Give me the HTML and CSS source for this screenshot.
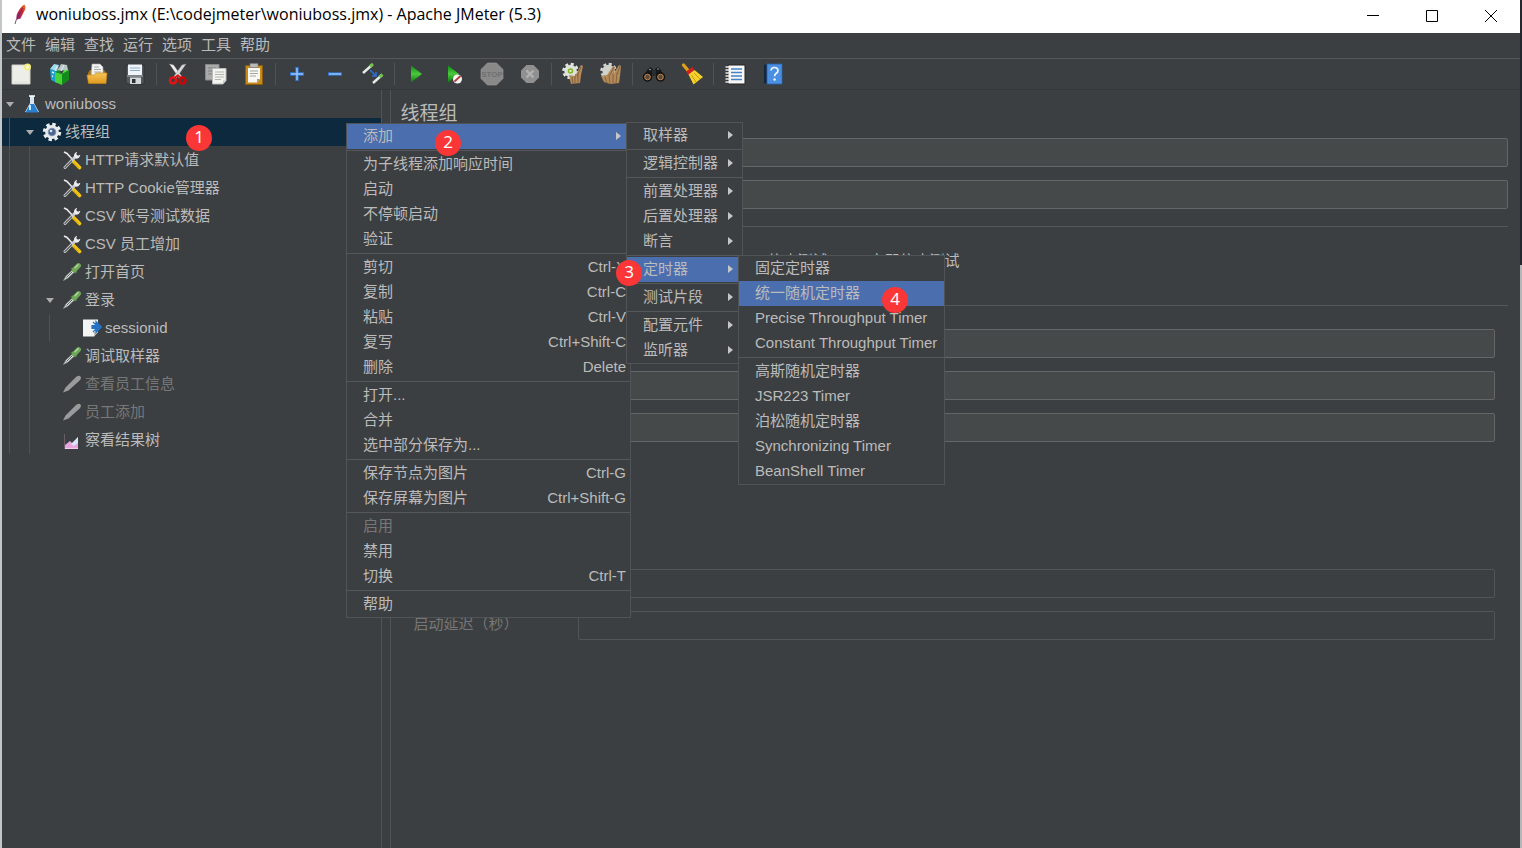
FILE: index.html
```html
<!DOCTYPE html>
<html lang="zh-CN">
<head>
<meta charset="utf-8">
<title>woniuboss.jmx - Apache JMeter (5.3)</title>
<link rel="stylesheet" href="styles.css">
</head>
<body>
<svg class="defs" aria-hidden="true">
  <defs>
    <linearGradient id="green" x1="0" y1="0" x2="0" y2="1"><stop offset="0" stop-color="#0a8f12"/><stop offset=".5" stop-color="#4cc83c"/><stop offset="1" stop-color="#067a0c"/></linearGradient>
    <linearGradient id="feather" x1="1" y1="0" x2="0" y2="1"><stop offset="0" stop-color="#f0852b"/><stop offset=".4" stop-color="#d22b35"/><stop offset="1" stop-color="#8b1f7a"/></linearGradient>
    <linearGradient id="gold" x1="0" y1="0" x2="0" y2="1"><stop offset="0" stop-color="#f5c45a"/><stop offset="1" stop-color="#e09a1c"/></linearGradient>
    <symbol id="tools" viewBox="0 0 20 20">
      <path d="M2 2l3 1.5L11 10" fill="none" stroke="#e8e8e8" stroke-width="1.6"/>
      <path d="M10.5 10.5l7 7" stroke="#f2c413" stroke-width="3.6" stroke-linecap="round"/>
      <path d="M11 12.5l5 5" stroke="#c58f06" stroke-width="1"/>
      <path d="M3 17.5L14 6" stroke="#c9cdd0" stroke-width="3" stroke-linecap="round"/>
      <path d="M3 17.5L9.5 11" stroke="#5b6064" stroke-width="1.2" stroke-linecap="round"/>
      <path d="M18.3 4.8l-2.5 1-1.6-1.5.9-2.6a4.2 4.2 0 0 0-3 5.2l1.8 1.9a4.2 4.2 0 0 0 4.4-4z" fill="#e9ebec"/>
    </symbol>
    <symbol id="pipette" viewBox="0 0 20 20">
      <path d="M1.500 18.500L4 14l7-6.500 2 2L6 16z" fill="#dfe4e2" stroke="#84908c" stroke-width=".7"/>
      <path d="M4.500 15.500l6-6" stroke="#555" stroke-width=".9"/>
      <path d="M9.500 6l4.800 4.800" stroke="#4d8a3b" stroke-width="2.200"/>
      <path d="M12.500 7.800l4-4.200" stroke="#6fa858" stroke-width="5" stroke-linecap="round"/>
      <path d="M13 5.800l3-3" stroke="#b5d9a4" stroke-width="1.300" stroke-linecap="round"/>
    </symbol>
    <symbol id="pipette-off" viewBox="0 0 20 20">
      <path d="M1 18.500l2.500-5L14 3q4-2.500 5 .5 0 1.800-1.600 3.200L6.500 16.500z" fill="#9a9b9b"/>
    </symbol>
  </defs>
</svg>

<div class="window">
<div class="app">
  <header class="titlebar">
    <svg class="app-icon" viewBox="0 0 16 22" aria-hidden="true"><path d="M12.500 1.500q2.500 3-1 8l-3 6-3.500 1Q3.500 13 6 9q3-6 6.500-7.500z" fill="url(#feather)"/><path d="M11 5L4.500 16 3 21" fill="none" stroke="#6a1c50" stroke-width=".8"/></svg>
    <h1 class="title">woniuboss.jmx (E:\codejmeter\woniuboss.jmx) - Apache JMeter (5.3)</h1>
    <button class="winbtn" aria-label="最小化"><svg viewBox="0 0 14 14"><path d="M1 6.500h12"/></svg></button>
    <button class="winbtn" aria-label="最大化"><svg viewBox="0 0 14 14"><path d="M1.500 1.500h11v11h-11z"/></svg></button>
    <button class="winbtn" aria-label="关闭"><svg viewBox="0 0 14 14"><path d="M1 1l12 12M13 1L1 13"/></svg></button>
  </header>

  <nav class="menubar">
    <button>文件</button><button>编辑</button><button>查找</button><button>运行</button><button>选项</button><button>工具</button><button>帮助</button>
  </nav>

  <div class="toolbar" role="toolbar">
    <button aria-label="新建"><svg viewBox="0 0 24 24"><path d="M3 3h18v19H3z" fill="#eeeee8" stroke="#d2d2cc"/><path d="M5 20h14" stroke="#ddd"/><circle cx="18.500" cy="5" r="3.500" fill="#f5ee7c"/><circle cx="18.500" cy="5" r="1.600" fill="#fffde0"/></svg></button>
    <button aria-label="模板"><svg viewBox="0 0 24 24"><path d="M3 7l7 2v12l-6-3z" fill="#1c9fd0"/><path d="M3 7l4-5 5 1-2 6z" fill="#9edcee"/><path d="M10 9l4-7 6 1 1 5z" fill="#b9c7c4"/><path d="M8 10l7 2v11l-7-3z" fill="#46d436"/><path d="M15 12l7-4v10l-7 5z" fill="#138a1c"/><path d="M8 10l4-2 3 4z" fill="#188c28"/><path d="M15 12l2-4 5 0z" fill="#5adc4c"/><path d="M10 4l-2 5M17 3l-3 6" stroke="#eef" stroke-width="1"/><path d="M5 10l2 1M5 14l1 .5" stroke="#d6f4ff" stroke-width="1.500"/></svg></button>
    <button aria-label="打开"><svg viewBox="0 0 24 24"><path d="M3 11l2-3h14l2 3v9H3z" fill="#a87819"/><path d="M7 2h8l3 3v10H6z" fill="#f4f4f4" stroke="#aaa" stroke-width=".6"/><path d="M9 5h5M9 7.500h7M9 10h7" stroke="#a8a8a8"/><path d="M2 13h7l2-2h11l-1 10.500H3.500z" fill="url(#gold)" stroke="#c88916" stroke-width=".6"/></svg></button>
    <button aria-label="保存"><svg viewBox="0 0 24 24"><path d="M3 3h18v19H5l-2-2z" fill="#53585d" stroke="#2c2f32" stroke-width=".8"/><path d="M5 2.500h14V13H5z" fill="#eef4fa"/><path d="M7 6h10M7 8.500h10" stroke="#91adc4" stroke-width="1.200"/><path d="M4 14h16" stroke="#a8b0b8"/><path d="M7 15.500h11V22H7z" fill="#d5d8da"/><path d="M9 17h3.500v4H9z" fill="#2c3033"/></svg></button>
    <span class="sep"></span>
    <button aria-label="剪切"><svg viewBox="0 0 24 24"><path d="M3.500 2l4 1 8.500 12-2.500 1.500z" fill="#f0f0f0" stroke="#aaa" stroke-width=".4"/><path d="M20 2l-4 1L7.500 15l2.500 1.500z" fill="#d7dadb" stroke="#999" stroke-width=".4"/><circle cx="7" cy="18.500" r="3" fill="none" stroke="#e01414" stroke-width="2.600"/><circle cx="16.500" cy="18.500" r="3" fill="none" stroke="#c80808" stroke-width="2.600"/><path d="M9 15.500l2.800-2 3 2" fill="none" stroke="#e01414" stroke-width="2"/></svg></button>
    <button aria-label="复制"><svg viewBox="0 0 24 24"><path d="M1.500 2.500H15V18H1.500z" fill="#a9abab" stroke="#888"/><path d="M4 6h8M4 9h5M4 12h5" stroke="#818383"/><path d="M8.500 6.500H22v12L19 22H8.500z" fill="#f3f3ef" stroke="#bbb"/><path d="M11 10h9M11 12.500h9M11 15h9M11 17.500h6" stroke="#b5b5b2"/><path d="M19 22v-3.500h3z" fill="#c6c6c2"/></svg></button>
    <button aria-label="粘贴"><svg viewBox="0 0 24 24"><path d="M3.500 3.500h17v19h-17z" fill="#c98a1a" stroke="#8a5b0e"/><path d="M6 6h12v11l-3 3.500H6z" fill="#f7f7f3"/><path d="M8 1.500h8v4H8z" fill="#b8bab8" stroke="#777" stroke-width=".6"/><path d="M8 9h8M8 11.500h8M8 14h6" stroke="#a3a3a0"/><path d="M15 20.500V17h3z" fill="#9d9d9a"/></svg></button>
    <span class="sep"></span>
    <button aria-label="展开"><svg viewBox="0 0 24 24"><path d="M12 5v14M5 12h14" stroke="#3277d5" stroke-width="3.400"/><path d="M12 6v12M6 12h12" stroke="#9cc9f8" stroke-width="1.400"/></svg></button>
    <button aria-label="折叠"><svg viewBox="0 0 24 24"><path d="M5 12h14" stroke="#3277d5" stroke-width="3.400"/><path d="M6 12h12" stroke="#9cc9f8" stroke-width="1.400"/></svg></button>
    <button aria-label="切换"><svg viewBox="0 0 24 24"><path d="M2 11l9-8" stroke="#e6ebe6" stroke-width="2.400"/><path d="M9 4.500l3-2.500" stroke="#74c350" stroke-width="3"/><path d="M12 21l9-8" stroke="#e6ebe6" stroke-width="2.400"/><path d="M18.500 15l3-2.500" stroke="#74c350" stroke-width="3"/><path d="M9 8l6 6m0-4v4h-4" stroke="#2c6fd2" stroke-width="1.600" fill="none"/></svg></button>
    <span class="sep"></span>
    <button aria-label="启动"><svg viewBox="0 0 24 24"><path d="M7 3.500L18 12 7 20.500z" fill="url(#green)"/></svg></button>
    <button aria-label="不停顿启动"><svg viewBox="0 0 24 24"><path d="M6 3.500L17 12 6 20.500z" fill="url(#green)"/><circle cx="15.500" cy="17" r="4.500" fill="#f4f4f4"/><path d="M12.500 19.500l6-5.500" stroke="#b33a3a" stroke-width="1.800"/></svg></button>
    <button aria-label="停止" disabled><svg viewBox="0 0 24 24"><path d="M7.500 1h9L23 7.500v9L16.500 23h-9L1 16.500v-9z" fill="#898989" stroke="#a0a0a0" stroke-width=".6"/><text x="12" y="15" text-anchor="middle" class="stop-text">STOP</text></svg></button>
    <button aria-label="关闭线程" disabled><svg viewBox="0 0 24 24"><path d="M8.500 3h7l5.500 5.500v7L15.500 21h-7L3 15.500v-7z" fill="#909090"/><path d="M8.500 8.500l7 7M15.500 8.500l-7 7" stroke="#b2b2b2" stroke-width="2.400"/></svg></button>
    <span class="sep"></span>
    <button aria-label="清除"><svg viewBox="0 0 24 24"><circle cx="9.500" cy="9" r="7" fill="none" stroke="#e5e5e2" stroke-width="2.600" stroke-dasharray="3 2.500"/><circle cx="9.500" cy="9" r="6.200" fill="#dfe3dc"/><circle cx="9.500" cy="9" r="2.800" fill="#86b82d"/><circle cx="9.500" cy="9" r="1.100" fill="#f5f5d0"/><path d="M8 13l6 1 6-11 2 1-2 9-1 8-9 1z" fill="#b48c5c"/><path d="M11 15l1 7M14 14l0 8M17 12l0 9M20 5l-4 9" stroke="#7b5832" stroke-width=".8"/></svg></button>
    <button aria-label="清除全部"><svg viewBox="0 0 24 24"><circle cx="9.500" cy="9" r="7" fill="none" stroke="#d5d7d2" stroke-width="2.600" stroke-dasharray="3 2.500"/><circle cx="9.500" cy="9" r="6.200" fill="#cfd3cc"/><path d="M2 14l6-1 6-9 2 1-1 6 5-8 2 1-1 10-1 7-9 1-6-2z" fill="#b48c5c"/><path d="M6 15l2 6M10 13l1 9M14 12l0 9M18 11l-1 10M15 5l-4 8M21 4l-3 8" stroke="#7b5832" stroke-width=".8"/></svg></button>
    <span class="sep"></span>
    <button aria-label="查找"><svg viewBox="0 0 24 24"><path d="M5 8l3-3 3 2v7H3zM19 8l-3-3-3 2v7h8z" fill="#17191b"/><path d="M7 7l2 1M15 7l2 0" stroke="#8f979c" stroke-width="1.200"/><path d="M10 8h4v6h-4z" fill="#2a2d30"/><circle cx="5.500" cy="15" r="4" fill="#292622" stroke="#111" stroke-width="1.500"/><circle cx="18.500" cy="15" r="4" fill="#292622" stroke="#111" stroke-width="1.500"/><circle cx="5.500" cy="15" r="2.800" fill="#5c4a38" stroke="#c08350"/><circle cx="18.500" cy="15" r="2.800" fill="#5c4a38" stroke="#c08350"/></svg></button>
    <button aria-label="重置搜索"><svg viewBox="0 0 24 24"><path d="M3.500 3l5 6" stroke="#e0a21c" stroke-width="3.200" stroke-linecap="round"/><path d="M6 9.500l6.500-4.500 2 3.500-6 4.500z" fill="#cf2020"/><path d="M8.500 12.500l6-4.500L23 15l-9.500 7.500z" fill="#f6d32c"/><path d="M11.500 13l4.500 7M14 11l6 6" stroke="#c9980c" stroke-width="1"/></svg></button>
    <span class="sep"></span>
    <button aria-label="函数助手"><svg viewBox="0 0 24 24"><path d="M5 3h17v19H5z" fill="#f7f7f7" stroke="#222"/><path d="M8 7h11M8 10.500h11M8 14h11M8 17.500h11" stroke="#4384c8" stroke-width="1.500"/><path d="M2.500 5h4M2.500 8h4M2.500 11h4M2.500 14h4M2.500 17h4M2.500 20h4" stroke="#e9e9e9" stroke-width="1.400"/></svg></button>
    <button aria-label="帮助"><svg viewBox="0 0 24 24"><path d="M3 3l3-1v20l-3-1z" fill="#15253c"/><path d="M6 2h15v20H6z" fill="#4a8fe0" stroke="#2b66b0" stroke-width=".8"/><path d="M10 8.500q.2-3 3.500-3t3.500 3q0 1.800-2 3-1.400.9-1.400 2.700" fill="none" stroke="#eef5ff" stroke-width="1.700"/><circle cx="13.600" cy="17.500" r="1.200" fill="#eef5ff"/></svg></button>
  </div>

  <main class="main">
    <section class="side">
      <ul class="tree" role="tree">
        <li><span class="twist open"></span><svg viewBox="0 0 20 20"><path d="M8 2h4v7l5 9H3l5-9z" fill="#d7e6f0"/><path d="M8 10h4l4.500 8.500h-13z" fill="#2a80d0"/><path d="M8 11v5" stroke="#c5e6ff" stroke-width="2"/><path d="M7 2h6" stroke="#fff" stroke-width="1.500"/></svg><span>woniuboss</span></li>
        <li class="selected"><i></i><span class="twist open"></span><svg viewBox="0 0 20 20"><circle cx="10" cy="10" r="7.700" fill="none" stroke="#eceeef" stroke-width="3" stroke-dasharray="3.400 2.650"/><circle cx="10" cy="10" r="5.600" fill="#8195b5" stroke="#e8eaec" stroke-width="2.600"/><circle cx="10" cy="10" r="3.200" fill="#4d658e"/><circle cx="9" cy="9" r="1.300" fill="#dce5f2"/></svg><span>线程组</span><b class="callout callout-tree">1</b></li>
        <li><i></i><i></i><span class="twist"></span><svg><use href="#tools"/></svg><span>HTTP请求默认值</span></li>
        <li><i></i><i></i><span class="twist"></span><svg><use href="#tools"/></svg><span>HTTP Cookie管理器</span></li>
        <li><i></i><i></i><span class="twist"></span><svg><use href="#tools"/></svg><span>CSV 账号测试数据</span></li>
        <li><i></i><i></i><span class="twist"></span><svg><use href="#tools"/></svg><span>CSV 员工增加</span></li>
        <li><i></i><i></i><span class="twist"></span><svg><use href="#pipette"/></svg><span>打开首页</span></li>
        <li><i></i><i></i><span class="twist open"></span><svg><use href="#pipette"/></svg><span>登录</span></li>
        <li><i></i><i></i><i></i><span class="twist"></span><svg viewBox="0 0 20 20"><path d="M1 1.500h15V14l-4 4.500H1z" fill="#f2f4f4"/><path d="M12 18.500V14h4z" fill="#b5b9ba"/><path d="M10 7.500h4V3.500L19.500 9 14 14.500v-4h-4zM11 4l3 3M11 14l3-3" fill="#2673c5" stroke="#2673c5" stroke-width="1.200"/></svg><span>sessionid</span></li>
        <li><i></i><i></i><span class="twist"></span><svg><use href="#pipette"/></svg><span>调试取样器</span></li>
        <li class="off"><i></i><i></i><span class="twist"></span><svg><use href="#pipette-off"/></svg><span>查看员工信息</span></li>
        <li class="off"><i></i><i></i><span class="twist"></span><svg><use href="#pipette-off"/></svg><span>员工添加</span></li>
        <li><i></i><i></i><span class="twist"></span><svg viewBox="0 0 20 20"><path d="M2.500 4v15" stroke="#6b5c6b"/><path d="M3 15l5-4 3 3 5-7v12H3z" fill="#e6a6dc"/><path d="M9 14l7-7v6l-4 3z" fill="#dce4fb"/><path d="M3 18.500h13" stroke="#f2cdf0"/></svg><span>察看结果树</span></li>
      </ul>
    </section>

    <section class="panel">
      <h2>线程组</h2>
      <div class="field short"><input type="text" aria-label="名称"></div>
      <div class="field short"><input type="text" aria-label="注释"></div>
      <fieldset class="actions" aria-label="在取样器错误后要执行的动作">
        <label><input type="radio" name="act" checked>继续</label>
        <label><input type="radio" name="act">启动下一进程循环</label>
        <label><input type="radio" name="act">停止线程</label>
        <label><input type="radio" name="act">停止测试</label>
        <label><input type="radio" name="act">立即停止测试</label>
      </fieldset>
      <fieldset class="props" aria-label="线程属性">
        <div class="field wide"><input type="text" aria-label="线程数"></div>
        <div class="field wide"><input type="text" aria-label="Ramp-Up时间（秒）"></div>
        <div class="field wide"><input type="text" aria-label="循环次数"></div>
        <div class="check"><input type="checkbox" aria-label="延迟创建线程直到需要"></div>
        <div class="check"><input type="checkbox" aria-label="调度器"></div>
        <div class="field wide"><input type="text" aria-label="持续时间（秒）" disabled></div>
        <div class="field off"><label for="delay">启动延迟（秒）</label><input id="delay" type="text" disabled></div>
      </fieldset>
    </section>
  </main>

  <ul class="menu context" role="menu">
    <li class="active"><button>添加<span class="more"></span></button>
      <b class="callout callout-add">2</b>
      <ul class="menu sub" role="menu">
        <li><button>取样器<span class="more"></span></button></li>
        <li class="line"></li>
        <li><button>逻辑控制器<span class="more"></span></button></li>
        <li class="line"></li>
        <li><button>前置处理器<span class="more"></span></button></li>
        <li><button>后置处理器<span class="more"></span></button></li>
        <li><button>断言<span class="more"></span></button></li>
        <li class="line"></li>
        <li class="active"><button>定时器<span class="more"></span></button>
          <b class="callout callout-timer">3</b>
          <ul class="menu sub timers" role="menu">
            <li><button>固定定时器</button></li>
            <li class="active"><button>统一随机定时器</button><b class="callout callout-random">4</b></li>
            <li><button>Precise Throughput Timer</button></li>
            <li><button>Constant Throughput Timer</button></li>
            <li class="line"></li>
            <li><button>高斯随机定时器</button></li>
            <li><button>JSR223 Timer</button></li>
            <li><button>泊松随机定时器</button></li>
            <li><button>Synchronizing Timer</button></li>
            <li><button>BeanShell Timer</button></li>
          </ul>
        </li>
        <li class="line"></li>
        <li><button>测试片段<span class="more"></span></button></li>
        <li class="line"></li>
        <li><button>配置元件<span class="more"></span></button></li>
        <li><button>监听器<span class="more"></span></button></li>
      </ul>
    </li>
    <li class="line"></li>
    <li><button>为子线程添加响应时间</button></li>
    <li><button>启动</button></li>
    <li><button>不停顿启动</button></li>
    <li><button>验证</button></li>
    <li class="line"></li>
    <li><button>剪切<kbd>Ctrl-X</kbd></button></li>
    <li><button>复制<kbd>Ctrl-C</kbd></button></li>
    <li><button>粘贴<kbd>Ctrl-V</kbd></button></li>
    <li><button>复写<kbd>Ctrl+Shift-C</kbd></button></li>
    <li><button>删除<kbd>Delete</kbd></button></li>
    <li class="line"></li>
    <li><button>打开...</button></li>
    <li><button>合并</button></li>
    <li><button>选中部分保存为...</button></li>
    <li class="line"></li>
    <li><button>保存节点为图片<kbd>Ctrl-G</kbd></button></li>
    <li><button>保存屏幕为图片<kbd>Ctrl+Shift-G</kbd></button></li>
    <li class="line"></li>
    <li><button disabled>启用</button></li>
    <li><button>禁用</button></li>
    <li><button>切换<kbd>Ctrl-T</kbd></button></li>
    <li class="line"></li>
    <li><button>帮助</button></li>
  </ul>
</div>
<div class="edge"></div>
</div>
</body>
</html>
```

FILE: styles.css
```css
*, *::before { box-sizing: border-box; }

body {
  margin: 0;
  background: #3c3f41;
  color: #bbbbbb;
  font: 15px/20px "Liberation Sans", "Noto Sans CJK SC", sans-serif;
}

button {
  margin: 0;
  padding: 0;
  border: 0;
  background: none;
  color: inherit;
  font: inherit;
}

ul { margin: 0; padding: 0; list-style: none; }
.defs { position: absolute; width: 0; height: 0; }

.window { display: flex; min-height: 100vh; border-left: 2px solid #c3c7c8; }
.app { position: relative; flex: 1; min-width: 0; display: flex; flex-direction: column; }
.edge { width: 2px; background: linear-gradient(#24272d 265px, #b4b6b7 265px); }

/* Title bar */
.titlebar { display: flex; height: 33px; background: #ffffff; color: #000000; }
.app-icon { width: 16px; height: 22px; margin: 3px 8px 0 10px; }
.title { flex: 1; margin: 0; font: 16px/29px "Open Sans", "Noto Sans", sans-serif; }
.winbtn { width: 59px; height: 29px; }
.winbtn svg { width: 14px; height: 14px; vertical-align: middle; fill: none; stroke: #000000; }

/* Menu bar and toolbar */
.menubar { display: flex; gap: 9px; height: 26px; padding: 0 4px 2px; border-bottom: 1px solid #555759; }
.toolbar { display: flex; align-items: center; height: 31px; border-bottom: 1px solid #343739; }
.toolbar button { width: 38px; height: 30px; }
.toolbar svg { display: block; width: 24px; height: 24px; margin: 0 auto; }
.sep { width: 5px; height: 22px; background: linear-gradient(90deg, transparent 2px, #515456 2px, #515456 3px, transparent 3px); }
.stop-text { font-size: 8px; font-weight: 700; fill: #707070; }

/* Test plan tree */
.main { flex: 1; display: flex; gap: 8px; }
.side { width: 25%; border-right: 1px solid #515456; }
.tree li { position: relative; display: flex; align-items: center; height: 28px; white-space: nowrap; }
.tree i { flex: none; align-self: stretch; width: 20px; background: linear-gradient(90deg, transparent 7px, #505355 7px, #505355 8px, transparent 8px); }
.tree svg { flex: none; width: 20px; height: 20px; margin-right: 3px; }
.tree .selected { background: #0d293e; }
.off { color: #777777; }
.twist { flex: none; width: 20px; }
.twist.open::before { content: ""; display: block; width: 8px; margin-left: 4px; border: 4px solid transparent; border-top: 5px solid #adadad; border-bottom: 0; }

/* Thread group form */
.panel { flex: 1; min-width: 0; padding: 12px 12px 0 10px; border-left: 1px solid #515456; }
h2 { margin: 0 0 12px; font-size: 19px; line-height: 24px; font-weight: 400; }
.field { display: flex; height: 29px; margin-bottom: 13px; }
.field label { width: 164px; line-height: 26px; white-space: nowrap; }
.field.short { padding-left: 60px; }
.field.wide { padding-left: 164px; }
.field input { flex: 1; min-width: 0; height: 29px; border: 1px solid #646667; border-radius: 2px; background: #45494a; color: inherit; font: inherit; }
.field input:disabled { border-color: #525557; background: transparent; }
fieldset { min-width: 0; margin: 0; padding: 0 13px; border: 0; border-top: 1px solid #555759; }
.actions { display: flex; gap: 24px; margin-top: 17px; padding-top: 24px; padding-bottom: 34px; white-space: nowrap; }
.actions label { display: flex; align-items: center; }
.actions input { width: 13px; height: 13px; margin: 0 5px 0 0; }
.props { padding-top: 23px; }
.check { display: flex; align-items: center; height: 29px; margin-bottom: 28px; }
.check input { margin: 0; }

/* Popup menus */
.menu { position: absolute; z-index: 1; border: 1px solid #515456; background: #3c3f41; white-space: nowrap; }
.context { top: 123px; left: 344px; width: 285px; }
.menu li { position: relative; height: 25px; }
.menu .line { height: 3px; padding-top: 1px; }
.menu .line::before { content: ""; display: block; height: 1px; background: #555759; }
.menu button { display: flex; align-items: center; width: 100%; height: 25px; padding: 0 4px 2px 16px; }
.menu .active { z-index: 2; }
.menu .active > button { background: #4b6eaf; }
.menu button:disabled { color: #777777; }
.menu kbd { margin-left: auto; font: inherit; }
.more { margin: 0 5px 0 auto; border: 4px solid transparent; border-left: 5px solid #c4c6c8; border-right: 0; }
.sub { top: -2px; left: calc(100% - 4px); width: 117px; }
.timers { width: 207px; }

/* Numbered step markers */
.callout { position: absolute; z-index: 3; width: 26px; height: 26px; border-radius: 50%; background: #fb3636; color: #ffffff; font: 17px/24px "Noto Sans", sans-serif; text-align: center; }
.callout-tree { top: 7px; left: 184px; }
.callout-add { top: 6px; left: 88px; }
.callout-timer { top: 3px; left: -11px; }
.callout-random { top: 6px; left: 143px; }
```
